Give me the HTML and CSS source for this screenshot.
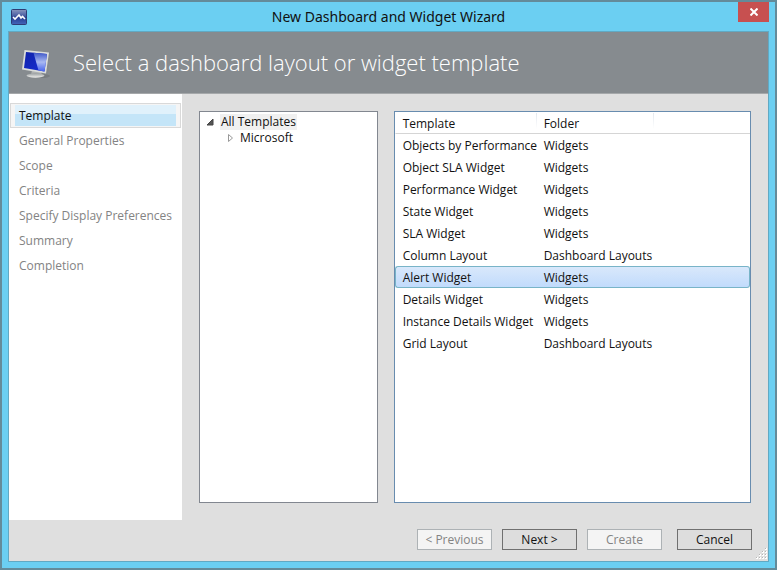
FILE: index.html
```html
<!DOCTYPE html>
<html lang="en">
<head>
<meta charset="utf-8">
<title>New Dashboard and Widget Wizard</title>
<link rel="stylesheet" href="styles.css">
</head>
<body>
<div class="window">
  <div class="titlebar">
    <svg class="app-icon" viewBox="0 0 16 16" aria-hidden="true">
      <defs><linearGradient id="app" x1="0" y1="0" x2="0" y2="1"><stop offset="0" stop-color="#8a96bd"/><stop offset=".45" stop-color="#4459a0"/><stop offset=".5" stop-color="#243a8c"/><stop offset="1" stop-color="#4467ba"/></linearGradient></defs>
      <rect x=".5" y=".5" width="15" height="15" rx="1" fill="url(#app)" stroke="#2e3c75"/>
      <path d="M2 8l2 2 4-4 2 3 1.500-1.500L14 10" fill="none" stroke="#fff" stroke-width="1.6"/>
    </svg>
    <div class="window-title">New Dashboard and Widget Wizard</div>
    <button class="close" type="button" aria-label="Close">
      <svg viewBox="0 0 8 8" aria-hidden="true"><path d="M.5.5l7 7M7.500.5l-7 7" stroke="#fff" stroke-width="2"/></svg>
    </button>
  </div>
  <div class="client">
    <header class="banner">
      <svg class="monitor" viewBox="0 0 30 30" aria-hidden="true">
        <defs>
          <linearGradient id="screen" x1="0" y1="0" x2="1" y2="1"><stop offset="0" stop-color="#1022a8"/><stop offset="1" stop-color="#1730d8"/></linearGradient>
          <linearGradient id="shine" x1="0" y1="0" x2="0" y2="1"><stop offset="0" stop-color="#3f58c8"/><stop offset=".5" stop-color="#a9b9f2"/><stop offset="1" stop-color="#4663ee"/></linearGradient>
          <linearGradient id="stand" x1="0" y1="0" x2="0" y2="1"><stop offset="0" stop-color="#999ea0"/><stop offset="1" stop-color="#f0f0ee"/></linearGradient>
        </defs>
        <ellipse cx="19" cy="28" rx="9" ry="2" fill="#777c7f"/>
        <path d="M10 22l9 2 1 3H9z" fill="#aeb1b2"/>
        <ellipse cx="13.500" cy="27.500" rx="9" ry="2.200" fill="url(#stand)"/>
        <path d="M26 4l2 1-2 20-3 .5z" fill="#85898c"/>
        <path d="M2.500 2l24.500 2.500-3 21L0 21.500z" fill="#dcdedb"/>
        <path d="M4 4l21 2-2.500 17.500L2 20z" fill="url(#screen)"/>
        <path d="M11.500 4.700L25 6l-2.500 17.500-6-1z" fill="url(#shine)"/>
      </svg>
      <h1>Select a dashboard layout or widget template</h1>
    </header>
    <div class="body">
      <nav class="steps" aria-label="Wizard steps">
        <a class="step current" href="#template" aria-current="step"><span>Template</span></a>
        <a class="step" href="#general"><span>General Properties</span></a>
        <a class="step" href="#scope"><span>Scope</span></a>
        <a class="step" href="#criteria"><span>Criteria</span></a>
        <a class="step" href="#display"><span>Specify Display Preferences</span></a>
        <a class="step" href="#summary"><span>Summary</span></a>
        <a class="step" href="#completion"><span>Completion</span></a>
      </nav>
      <main class="content" id="template">
        <section class="tree" aria-label="Template folders">
          <div class="node">
            <button type="button" class="toggle" aria-label="Collapse All Templates"><svg viewBox="0 0 8 8" aria-hidden="true"><path d="M7 1v6H1z" fill="#555" stroke="#444"/></svg></button>
            <span class="node-label selected">All Templates</span>
          </div>
          <div class="node child">
            <button type="button" class="toggle" aria-label="Expand Microsoft"><svg viewBox="0 0 8 8" aria-hidden="true"><path d="M2.500.5v7L6.500 4z" fill="#fff" stroke="#999"/></svg></button>
            <span class="node-label">Microsoft</span>
          </div>
        </section>
        <section class="list" aria-label="Templates">
          <table>
            <colgroup><col class="col-template"><col class="col-folder"><col></colgroup>
            <thead><tr><th scope="col">Template</th><th scope="col">Folder</th><td></td></tr></thead>
            <tbody>
              <tr><td>Objects by Performance</td><td>Widgets</td><td></td></tr>
              <tr><td>Object SLA Widget</td><td>Widgets</td><td></td></tr>
              <tr><td>Performance Widget</td><td>Widgets</td><td></td></tr>
              <tr><td>State Widget</td><td>Widgets</td><td></td></tr>
              <tr><td>SLA Widget</td><td>Widgets</td><td></td></tr>
              <tr><td>Column Layout</td><td>Dashboard Layouts</td><td></td></tr>
              <tr class="picked"><td>Alert Widget</td><td>Widgets</td><td></td></tr>
              <tr><td>Details Widget</td><td>Widgets</td><td></td></tr>
              <tr><td>Instance Details Widget</td><td>Widgets</td><td></td></tr>
              <tr><td>Grid Layout</td><td>Dashboard Layouts</td><td></td></tr>
            </tbody>
          </table>
        </section>
      </main>
    </div>
    <footer class="actions">
      <button type="button" disabled>&lt; Previous</button>
      <button type="button">Next &gt;</button>
      <button type="button" disabled>Create</button>
      <button type="button" class="cancel">Cancel</button>
      <svg class="grip" viewBox="0 0 12 12" aria-hidden="true">
        <path d="M10 1h2M7 4h2M10 4h2M4 7h2M7 7h2M10 7h2M1 10h2M4 10h2M7 10h2M10 10h2" stroke="#fff" stroke-width="2"/>
        <path d="M10 .5h1M7 3.500h1M10 3.500h1M4 6.500h1M7 6.500h1M10 6.500h1M1 9.500h1M4 9.500h1M7 9.500h1M10 9.500h1" stroke="#b5b5b5"/>
      </svg>
    </footer>
  </div>
</div>
</body>
</html>
```
FILE: styles.css
```css
* { box-sizing: border-box; }

body {
  margin: 0;
  font: 12px/16px "Open Sans", "Noto Sans", sans-serif;
  color: #111;
}

button { font: inherit; color: inherit; cursor: default; }

.window {
  display: flex;
  flex-direction: column;
  min-height: 100vh;
  padding: 0 6px 6px;
  border: 2px solid #648b9a;
  background: #6bcff2;
}

.titlebar {
  display: grid;
  grid-template-columns: 31px 1fr 31px;
  height: 29px;
  align-items: center;
}

.app-icon { width: 16px; height: 16px; margin-left: 3px; }

.window-title {
  font-family: "Noto Sans", "Open Sans", sans-serif;
  font-size: 14px;
  line-height: 20px;
  text-align: center;
}

.close {
  display: flex;
  align-items: center;
  justify-content: center;
  align-self: start;
  height: 20px;
  padding: 0;
  border: 0;
  background: #c75050;
}

.close svg { width: 8px; height: 8px; }

.client {
  display: flex;
  flex: 1;
  flex-direction: column;
  border: 1px solid #61a9c3;
  background: #dfdfdf;
}

.banner {
  display: flex;
  align-items: center;
  gap: 21px;
  height: 62px;
  padding-left: 13px;
  border-bottom: 1px solid #a5a8aa;
  background: #868b8f;
  color: #fff;
}

.monitor { width: 30px; height: 30px; }

h1 {
  margin: 0;
  padding-bottom: 2px;
  font: 300 22px/30px "Open Sans", "Noto Sans", sans-serif;
}

.body { display: flex; flex: 1; }

.steps {
  flex: none;
  width: 173px;
  padding: 9px 1px;
  background: #fff;
}

.step {
  display: block;
  height: 25px;
  padding: 1px 4px;
  border: 1px solid #fff;
  color: #838383;
  text-decoration: none;
}

.step span {
  display: block;
  padding: 3px 4px 2px;
  white-space: nowrap;
}

.current {
  border-color: #d9d9d9;
  background: #f5f5f5;
  color: #111;
}

.current span { background: linear-gradient(#e0f1fb 45%, #c4e5f8 45%); }

.content {
  display: grid;
  flex: 1;
  grid-template-columns: 1fr 2fr;
  gap: 16px;
  padding: 17px;
}

.tree {
  padding: 2px 6px;
  border: 1px solid #828790;
  background: #fff;
}

.node { display: flex; align-items: center; gap: 6px; height: 16px; }
.child { padding-left: 20px; }
.child .node-label { padding: 0; }

.toggle {
  display: flex;
  padding: 0;
  border: 0;
  background: none;
}

.toggle svg { width: 8px; height: 8px; }
.node-label { padding: 0 1px; }
.selected { background: #f0f0f0; }

.list { border: 1px solid #688caf; background: #fff; }

table {
  width: 100%;
  table-layout: fixed;
  border-collapse: separate;
  border-spacing: 0;
}

.col-template { width: 142px; }
.col-folder { width: 117px; }

th, td {
  height: 22px;
  padding: 2px 7px 0;
  border: 1px solid transparent;
  border-width: 1px 0;
  font-weight: 400;
  text-align: left;
  white-space: nowrap;
}

th:first-child, td:first-child { border-left-width: 1px; }

thead th, thead td { border-bottom-color: #d5d5d5; }

thead th {
  background: linear-gradient(#e3e8ee, #fff) right top / 1px 16px no-repeat;
}

.picked td {
  border-color: #78b4c8;
  background: linear-gradient(#d9e8fb, #c1dbfc);
}

.picked td:first-child { border-radius: 3px 0 0 3px; }
.picked td:last-child { border-right-width: 1px; border-radius: 0 3px 3px 0; }

.actions {
  position: relative;
  display: flex;
  justify-content: flex-end;
  gap: 10px;
  padding: 9px 16px 11px;
}

.actions button {
  width: 75px;
  height: 21px;
  padding: 0;
  border: 1px solid #707070;
  background: #ddd;
}

.actions button:disabled {
  border-color: #adb2b5;
  background: #f4f4f4;
  color: #838383;
}

.actions .cancel { margin-left: 5px; }

.grip {
  position: absolute;
  right: 1px;
  bottom: 1px;
  width: 12px;
  height: 12px;
}
```
